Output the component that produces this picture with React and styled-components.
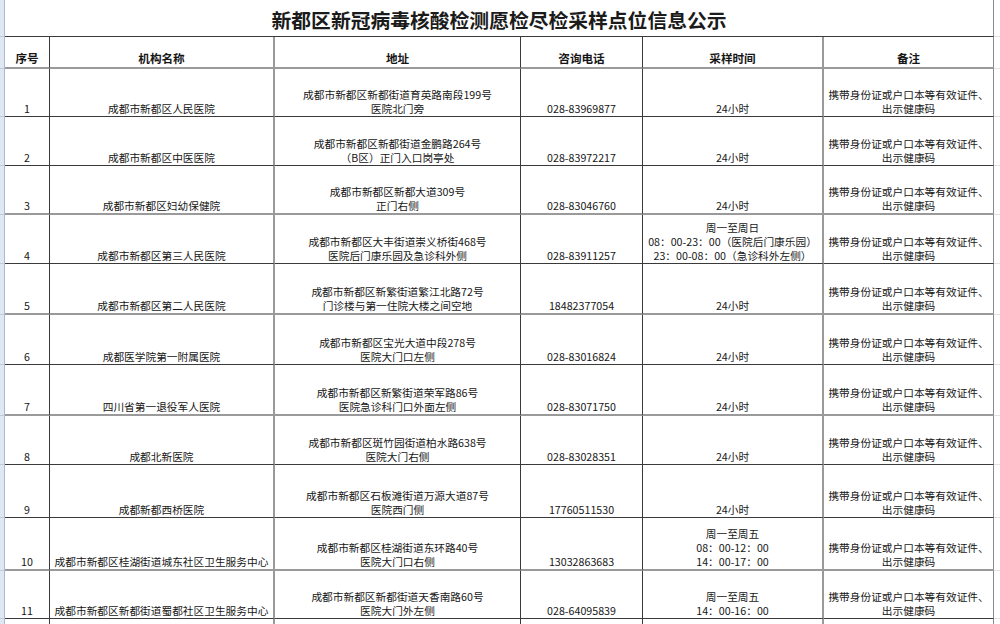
import React from 'react';
import styled, { createGlobalStyle } from 'styled-components';

const Global = createGlobalStyle`
  html, body { margin: 0; padding: 0; background: #fff; overflow: hidden; }
  body { font-family: "Noto Sans CJK SC", "Noto Sans", sans-serif; color: #161616; }
`;

const DARK = '1px solid #3a3a3a';
const GRAY = '2px solid #9a9a9a';

const Sheet = styled.table`
  border-collapse: separate;
  border-spacing: 0;
  table-layout: fixed;
  width: 1000px;
`;

const Row = styled.tr`
  height: ${(p) => p.$h}px;
`;

const RowHead = styled.td`
  padding: 0;
  background: #dfe7f3;
  border-right: 1px solid #a7bad6;
  border-bottom: ${(p) => (p.$open ? 'none' : '1px solid #bccbe2')};
`;

const Spare = styled.td`
  padding: 0;
  background: #fff;
  border-bottom: ${(p) => (p.$open ? 'none' : '1px solid #e2e2e2')};
`;

const TitleCell = styled.td`
  padding: 0 0 3px;
  text-align: center;
  vertical-align: bottom;
  font-size: 19.8px;
  font-weight: 700;
  line-height: 26px;
  color: #1b1b1b;
  border-right: 1px solid #8a8a8a;
  border-bottom: ${DARK};
`;

const Cell = styled.td`
  padding: 0 1px ${(p) => (p.$head ? '2px' : '0')};
  text-align: center;
  vertical-align: bottom;
  font-size: ${(p) => (p.$head ? '11.6px' : '10.7px')};
  font-weight: ${(p) => (p.$head ? 700 : 400)};
  line-height: 14px;
  white-space: nowrap;
  overflow: hidden;
  border-right: ${(p) => p.$vr};
  border-bottom: ${(p) => p.$hr};
`;

const Line = styled.div`
  white-space: nowrap;
`;

const COLS = [5, 45, 225, 246, 122, 181, 170, 6];
const VR = [DARK, GRAY, DARK, DARK, GRAY, '1px solid #8a8a8a'];

const REMARK = ['携带身份证或户口本等有效证件、', '出示健康码'];

const rows = [
  { h: 48, hr: DARK, name: '成都市新都区人民医院', addr: ['成都市新都区新都街道育英路南段199号', '医院北门旁'], tel: '028-83969877', time: ['24小时'] },
  { h: 49, hr: DARK, name: '成都市新都区中医医院', addr: ['成都市新都区新都街道金鹏路264号', '（B区）正门入口岗亭处'], tel: '028-83972217', time: ['24小时'] },
  { h: 49, hr: GRAY, name: '成都市新都区妇幼保健院', addr: ['成都市新都区新都大道309号', '正门右侧'], tel: '028-83046760', time: ['24小时'] },
  { h: 49, hr: DARK, name: '成都市新都区第三人民医院', addr: ['成都市新都区大丰街道崇义桥街468号', '医院后门康乐园及急诊科外侧'], tel: '028-83911257', time: ['周一至周日', '08：00-23：00（医院后门康乐园）', '23：00-08：00（急诊科外左侧）'] },
  { h: 51, hr: GRAY, name: '成都市新都区第二人民医院', addr: ['成都市新都区新繁街道繁江北路72号', '门诊楼与第一住院大楼之间空地'], tel: '18482377054', time: ['24小时'] },
  { h: 50, hr: DARK, name: '成都医学院第一附属医院', addr: ['成都市新都区宝光大道中段278号', '医院大门口左侧'], tel: '028-83016824', time: ['24小时'] },
  { h: 51, hr: GRAY, name: '四川省第一退役军人医院', addr: ['成都市新都区新繁街道荣军路86号', '医院急诊科门口外面左侧'], tel: '028-83071750', time: ['24小时'] },
  { h: 49, hr: DARK, name: '成都北新医院', addr: ['成都市新都区斑竹园街道柏水路638号', '医院大门右侧'], tel: '028-83028351', time: ['24小时'] },
  { h: 53, hr: DARK, name: '成都新都西桥医院', addr: ['成都市新都区石板滩街道万源大道87号', '医院西门侧'], tel: '17760511530', time: ['24小时'] },
  { h: 53, hr: GRAY, name: '成都市新都区桂湖街道城东社区卫生服务中心', addr: ['成都市新都区桂湖街道东环路40号', '医院大门口右侧'], tel: '13032863683', time: ['周一至周五', '08：00-12：00', '14：00-17：00'] },
  { h: 48, hr: DARK, name: '成都市新都区新都街道蜀都社区卫生服务中心', addr: ['成都市新都区新都街道天香南路60号', '医院大门外左侧'], tel: '028-64095839', time: ['周一至周五', '14：00-16：00'] },
];

const Lines = ({ items }) => items.map((t, i) => <Line key={i}>{t}</Line>);

export default function App() {
  return (
    <>
      <Global />
      <Sheet>
        <colgroup>
          {COLS.map((w, i) => (
            <col key={i} style={{ width: w }} />
          ))}
        </colgroup>
        <tbody>
          <Row $h={37}>
            <RowHead />
            <TitleCell colSpan={6}>新都区新冠病毒核酸检测愿检尽检采样点位信息公示</TitleCell>
            <Spare />
          </Row>
          <Row $h={32}>
            <RowHead />
            {['序号', '机构名称', '地址', '咨询电话', '采样时间', '备注'].map((t, i) => (
              <Cell key={t} $head $vr={VR[i]} $hr={GRAY}>
                {t}
              </Cell>
            ))}
            <Spare />
          </Row>
          {rows.map((r, idx) => (
            <Row key={idx} $h={r.h}>
              <RowHead />
              <Cell $vr={VR[0]} $hr={r.hr}>{idx + 1}</Cell>
              <Cell $vr={VR[1]} $hr={r.hr}>{r.name}</Cell>
              <Cell $vr={VR[2]} $hr={r.hr}><Lines items={r.addr} /></Cell>
              <Cell $vr={VR[3]} $hr={r.hr}>{r.tel}</Cell>
              <Cell $vr={VR[4]} $hr={r.hr}><Lines items={r.time} /></Cell>
              <Cell $vr={VR[5]} $hr={r.hr}><Lines items={REMARK} /></Cell>
              <Spare />
            </Row>
          ))}
          <Row $h={5}>
            <RowHead $open />
            {VR.map((v, i) => (
              <Cell key={i} $vr={v} $hr="none" />
            ))}
            <Spare $open />
          </Row>
        </tbody>
      </Sheet>
    </>
  );
}
